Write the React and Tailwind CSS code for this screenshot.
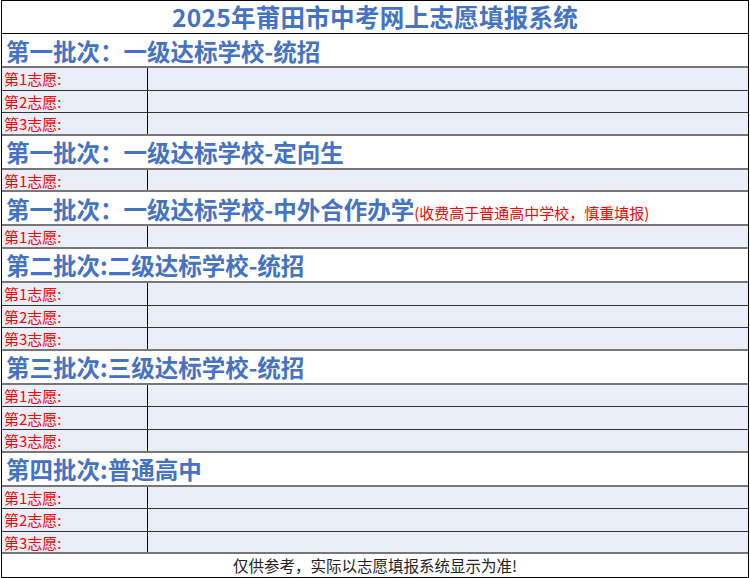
import React from 'react';

const font = { fontFamily: '"Noto Sans CJK SC", "Noto Sans", sans-serif' };

const sections = [
  { title: '第一批次：一级达标学校-统招', rows: 3 },
  { title: '第一批次：一级达标学校-定向生', rows: 1 },
  { title: '第一批次：一级达标学校-中外合作办学', note: '(收费高于普通高中学校，慎重填报)', rows: 1 },
  { title: '第二批次:二级达标学校-统招', rows: 3 },
  { title: '第三批次:三级达标学校-统招', rows: 3 },
  { title: '第四批次:普通高中', rows: 3 },
];

export default function App() {
  return (
    <div className="w-[750px] h-[578px] bg-white overflow-hidden" style={font}>
      <div className="border-[1.5px] border-black mx-[1px] flex flex-col">
        <div className="h-[33px] flex items-center justify-center text-[24.5px] leading-none font-bold text-[#4472c4] border-b-[1.5px] border-black tracking-[0.3px]">
          2025年莆田市中考网上志愿填报系统
        </div>
        {sections.map((s, i) => (
          <div key={i}>
            <div className="h-[34px] flex items-end pb-[3px] px-[4px] text-[23.5px] leading-none font-bold text-[#4472c4] border-b-2 border-[#777] whitespace-nowrap">
              {s.title}
              {s.note && <span className="text-[15px] font-normal text-[#ff0000] mb-[1px]">{s.note}</span>}
            </div>
            {Array.from({ length: s.rows }).map((_, j) => (
              <div key={j} className="h-[22.6px] flex bg-[#e9eef8] border-b-[1.5px] border-[#333] last:border-b-2 last:border-[#777]">
                <div className="w-[146px] border-r-[1.5px] border-black text-[15px] leading-none text-[#ff0000] px-[2px] flex items-center">
                  第{j + 1}志愿:
                </div>
                <div className="flex-1" />
              </div>
            ))}
          </div>
        ))}
        <div className="h-[23px] flex items-center justify-center text-[15.5px] leading-none text-[#222]">
          仅供参考，实际以志愿填报系统显示为准!
        </div>
      </div>
    </div>
  );
}
